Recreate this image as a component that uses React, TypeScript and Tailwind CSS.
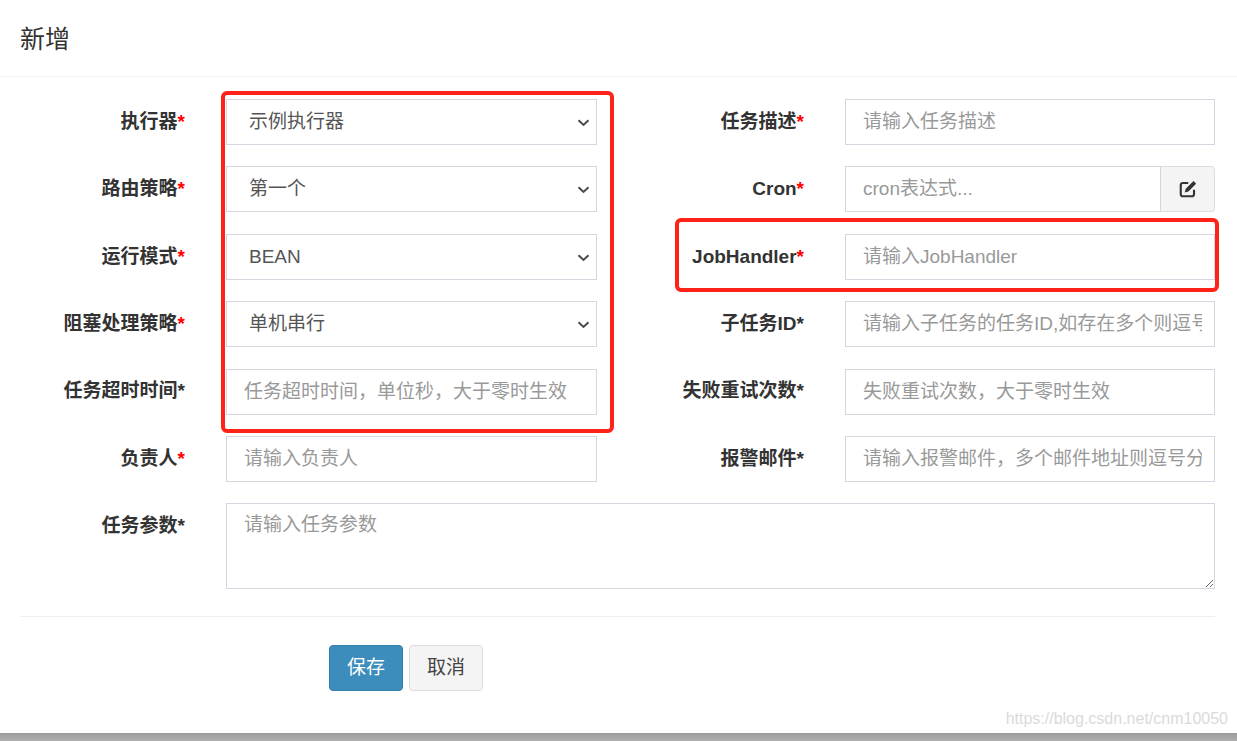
import { ReactNode } from 'react'

const inputCls =
  'h-[46px] w-full border border-[#d2d6de] bg-white pl-[17px] pr-[12px] text-[19px] text-[#555] outline-none placeholder:text-[#999]'

function Label({ text, red, top }: { text: string; red?: boolean; top?: boolean }) {
  return (
    <label
      className={`flex justify-end text-[19px] font-bold text-[#333] whitespace-nowrap ${
        top ? 'items-start pt-[9px]' : 'items-center'
      }`}
    >
      {text}
      <span className={red ? 'text-[#f00]' : 'text-[#333]'}>*</span>
    </label>
  )
}

function Select({ value }: { value: string }) {
  return (
    <div className="relative h-[46px]">
      <select
        defaultValue={value}
        className="h-full w-full appearance-none border border-[#d2d6de] bg-white pl-[22px] pr-[30px] text-[19px] text-[#555] outline-none"
      >
        <option>{value}</option>
      </select>
      <svg
        className="pointer-events-none absolute right-[7px] top-1/2 -translate-y-[40%]"
        width="13"
        height="8"
        viewBox="0 0 13 8"
        fill="none"
      >
        <polyline points="1.5,1.5 6.5,6.2 11.5,1.5" stroke="#4a4a4a" strokeWidth="2" />
      </svg>
    </div>
  )
}

function Input({ placeholder }: { placeholder: string }) {
  return <input type="text" placeholder={placeholder} className={inputCls} />
}

function Row({ children }: { children: ReactNode }) {
  return <>{children}</>
}

export default function App() {
  return (
    <div className="relative flex min-h-[741px] flex-col bg-white font-['Liberation_Sans','Noto_Sans_CJK_SC',sans-serif]">
      <div className="flex h-[77px] shrink-0 items-center border-b border-[#f4f4f4] px-[20px] pt-[4px] text-[25px] text-[#333]">
        新增
      </div>

      <form className="flex flex-1 flex-col pt-[22px]" onSubmit={(e) => e.preventDefault()}>
        <div className="grid grid-cols-[185px_371px_166px_370px] gap-x-[41px] gap-y-[21.4px]">
          <Row>
            <Label text="执行器" red />
            <Select value="示例执行器" />
            <Label text="任务描述" red />
            <Input placeholder="请输入任务描述" />
          </Row>
          <Row>
            <Label text="路由策略" red />
            <Select value="第一个" />
            <Label text="Cron" red />
            <div className="flex h-[46px]">
              <input type="text" placeholder="cron表达式..." className={`${inputCls} flex-1`} />
              <button
                type="button"
                className="flex w-[54px] shrink-0 items-center justify-center rounded-r-[4px] border border-l-0 border-[#ddd] bg-[#f4f4f4]"
              >
                <svg width="20" height="20" viewBox="0 0 16 16" fill="none">
                  <path
                    d="M8.2 3.2H3.8A1.6 1.6 0 0 0 2.2 4.8v7.4a1.6 1.6 0 0 0 1.6 1.6h7.4a1.6 1.6 0 0 0 1.6-1.6V8.6"
                    stroke="#333"
                    strokeWidth="1.7"
                  />
                  <path d="M12.4 1.6l2.1 2.1L8.3 9.9l-3 .9.9-3z" fill="#333" />
                </svg>
              </button>
            </div>
          </Row>
          <Row>
            <Label text="运行模式" red />
            <Select value="BEAN" />
            <Label text="JobHandler" red />
            <Input placeholder="请输入JobHandler" />
          </Row>
          <Row>
            <Label text="阻塞处理策略" red />
            <Select value="单机串行" />
            <Label text="子任务ID" />
            <Input placeholder="请输入子任务的任务ID,如存在多个则逗号分隔" />
          </Row>
          <Row>
            <Label text="任务超时时间" />
            <Input placeholder="任务超时时间，单位秒，大于零时生效" />
            <Label text="失败重试次数" />
            <Input placeholder="失败重试次数，大于零时生效" />
          </Row>
          <Row>
            <Label text="负责人" red />
            <Input placeholder="请输入负责人" />
            <Label text="报警邮件" />
            <Input placeholder="请输入报警邮件，多个邮件地址则逗号分隔" />
          </Row>
          <Row>
            <Label text="任务参数" top />
            <textarea
              placeholder="请输入任务参数"
              className="col-span-3 h-[86px] w-full border border-[#d2d6de] bg-white px-[17px] pt-[7px] text-[19px] text-[#555] outline-none placeholder:text-[#999]"
            />
          </Row>
        </div>

        <div className="ml-[20px] mr-[22px] mt-[27px] border-t border-[#eee]" />

        <div className="ml-[329px] mt-[28px] flex gap-[6px]">
          <button
            type="submit"
            className="h-[46px] w-[74px] rounded-[4px] border border-[#367fa9] bg-[#3c8dbc] text-[19px] text-white"
          >
            保存
          </button>
          <button
            type="button"
            className="h-[46px] w-[74px] rounded-[4px] border border-[#ddd] bg-[#f4f4f4] text-[19px] text-[#444]"
          >
            取消
          </button>
        </div>
        <div className="flex-1" />
      </form>

      <div className="h-[8px] shrink-0 bg-gradient-to-b from-[#9a9a9a] to-[#b0b0b0]" />

      <div className="pointer-events-none absolute bottom-[10px] right-[9px] text-[16px] text-[#dadada]">
        https://blog.csdn.net/cnm10050
      </div>

      <div className="pointer-events-none absolute left-[221px] top-[91px] h-[342px] w-[393px] rounded-[6px] border-[4px] border-[#ff2218]" />
      <div className="pointer-events-none absolute left-[675px] top-[218px] h-[74px] w-[544px] rounded-[6px] border-[4px] border-[#ff2218]" />
    </div>
  )
}
